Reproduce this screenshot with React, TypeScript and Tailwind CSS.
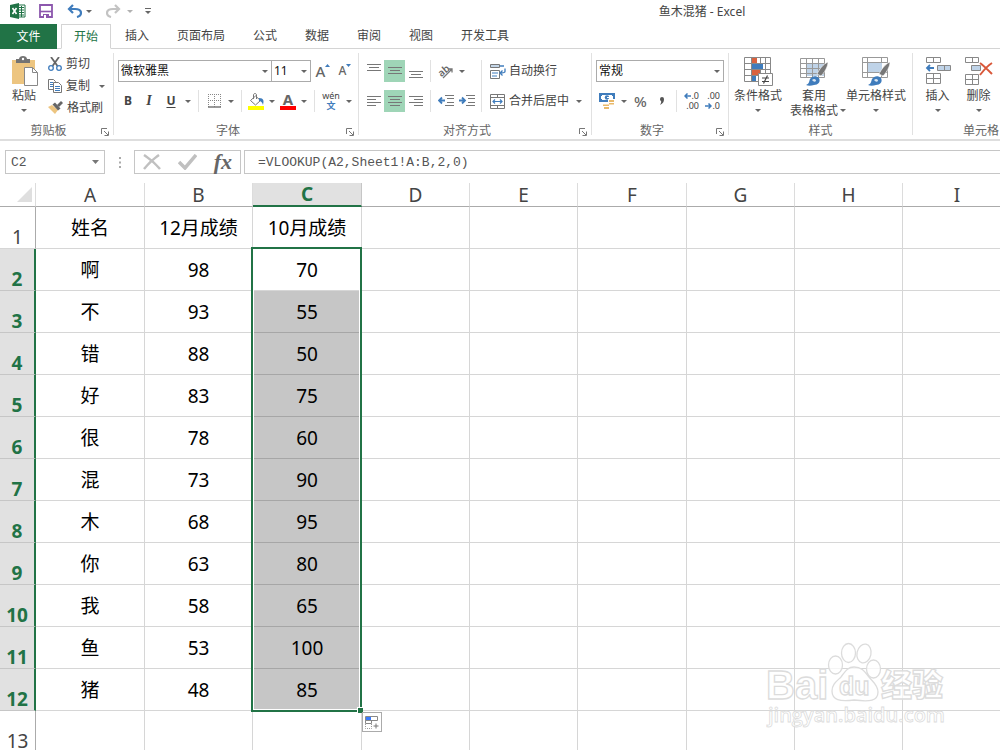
import type React from "react"
import { useState } from "react"

// 成绩表数据
const students = [
  { name: "啊", dec: 98, oct: 70 },
  { name: "不", dec: 93, oct: 55 },
  { name: "错", dec: 88, oct: 50 },
  { name: "好", dec: 83, oct: 75 },
  { name: "很", dec: 78, oct: 60 },
  { name: "混", dec: 73, oct: 90 },
  { name: "木", dec: 68, oct: 95 },
  { name: "你", dec: 63, oct: 80 },
  { name: "我", dec: 58, oct: 65 },
  { name: "鱼", dec: 53, oct: 100 },
  { name: "猪", dec: 48, oct: 85 },
]

const columns = ["A", "B", "C", "D", "E", "F", "G", "H", "I"]
const wideColumns = ["A", "C", "F", "I"]
const emptyColumns = ["D", "E", "F", "G", "H", "I"]
const tabs = ["开始", "插入", "页面布局", "公式", "数据", "审阅", "视图", "开发工具"]

interface IconProps {
  w: number
  h: number
  children: React.ReactNode
}

function Icon({ w, h, children }: IconProps) {
  return (
    <svg width={w} height={h} viewBox={`0 0 ${w} ${h}`} fill="none" className="shrink-0" aria-hidden="true">
      {children}
    </svg>
  )
}

// 下拉小三角
function Caret() {
  return (
    <Icon w={6} h={3}>
      <path d="M0 0h6L3 3z" fill="#666" />
    </Icon>
  )
}

function CaretButton({ label }: { label: string }) {
  return (
    <button type="button" aria-label={label} className="flex h-[22px] w-3 shrink-0 items-center justify-center">
      <Caret />
    </button>
  )
}

interface ToolProps {
  label: string
  className?: string
  active?: boolean
  children: React.ReactNode
}

function Tool({ label, className = "w-[21px]", active, children }: ToolProps) {
  return (
    <button
      type="button"
      aria-label={label}
      className={`flex h-[22px] shrink-0 items-center justify-center ${active ? "bg-[#9fd5b7]" : ""} ${className}`}
    >
      {children}
    </button>
  )
}

function Divider({ tall }: { tall?: boolean }) {
  return <div className={`mx-1 w-px shrink-0 bg-[#e1e1e1] ${tall ? "h-[52px]" : "h-[22px]"}`} />
}

// 功能区分组：上方按钮，下方组名
interface GroupProps {
  name: string
  className: string
  launcher?: boolean
  last?: boolean
  children: React.ReactNode
}

function Group({ name, className, launcher, last, children }: GroupProps) {
  return (
    <section aria-label={name} className={`relative flex shrink-0 flex-col ${className}`}>
      <div className="h-[74px]">{children}</div>
      <div className="text-center leading-4 text-[#666]">{name}</div>
      {launcher && (
        <button type="button" aria-label={`${name}设置`} className="absolute right-1 bottom-[3px]">
          <Icon w={8} h={8}>
            <path d="M.5 6V.5H6M3 3l4 4M7.5 3.5v4h-4" stroke="#777" />
          </Icon>
        </button>
      )}
      {!last && <div className="absolute top-1 -right-px bottom-1 w-px bg-[#e1e1e1]" />}
    </section>
  )
}

interface PickerProps {
  label: string
  value: string
  className: string
}

function Picker({ label, value, className }: PickerProps) {
  return (
    <div className={`relative h-[22px] shrink-0 ${className}`}>
      <select
        aria-label={label}
        defaultValue={value}
        className="h-full w-full appearance-none border border-[#ababab] bg-white pl-0.5 text-[#111] outline-none"
      >
        <option>{value}</option>
      </select>
      <div className="pointer-events-none absolute inset-y-0 right-1 flex items-center">
        <Caret />
      </div>
    </div>
  )
}

// 对齐图标，每条线 [起点, 终点]
function Lines({ rows, top = 2 }: { rows: number[][]; top?: number }) {
  return (
    <Icon w={14} h={14}>
      {rows.map(([from, to], i) => (
        <path key={i} d={`M${from} ${top + i * 3 + 0.5}H${to}`} stroke="#777" />
      ))}
    </Icon>
  )
}

interface BigToolProps {
  label: string[]
  className: string
  inlineCaret?: boolean
  children: React.ReactNode
}

function BigTool({ label, className, inlineCaret, children }: BigToolProps) {
  return (
    <button type="button" className={`flex shrink-0 flex-col items-center leading-[15px] ${className}`}>
      <span className="mb-[2px] flex h-[30px] items-center">{children}</span>
      {label.map((line, i) => (
        <span key={line} className="relative whitespace-nowrap">
          {line}
          {inlineCaret && i === 1 && (
            <span className="absolute inset-y-0 -right-2 flex items-center">
              <Caret />
            </span>
          )}
        </span>
      ))}
      {!inlineCaret && (
        <span className="flex h-[15px] items-center">
          <Caret />
        </span>
      )}
    </button>
  )
}

function Brush() {
  return (
    <>
      <path d="M29 6c-5 2-9 8-11 12l4 2c3-3 7-9 7-14z" fill="#777" stroke="#fff" strokeWidth=".6" />
      <path d="M7 29c3-1 3-3 4-6 2-3 6-4 9-1 2 4-1 7-5 7-3 1-6 1-8 0z" fill="#3f7cbc" />
      <path d="M13 24c2-2 4-1 4 1-1 1-2 1-3 0" fill="#dbe7f3" />
    </>
  )
}

function TitleBar() {
  return (
    <header className="flex h-6 items-start">
      <div className="flex h-[22px] w-40 shrink-0 items-center pl-[9px]">
        <Icon w={18} h={18}>
          <path d="M9 3h7v12H9z" fill="#fff" stroke="#217346" />
          <path d="M10 5.500h5M10 8h5M10 10.500h5M10 13h5M12.500 4v11" stroke="#217346" />
          <path d="M1 3l9-2v16l-9-2z" fill="#217346" />
          <path d="M3.500 6l4 6M7.500 6l-4 6" stroke="#fff" strokeWidth="1.600" />
        </Icon>
        <button type="button" aria-label="保存" className="ml-3">
          <Icon w={14} h={14}>
            <path d="M1 1h12v12H1z" stroke="#8c57ad" strokeWidth="1.800" />
            <path d="M1 7.500h12" stroke="#8c57ad" strokeWidth="1.600" />
            <path d="M4 10h6v4H4z" fill="#8c57ad" />
            <path d="M5 11h2v3H5z" fill="#fff" />
          </Icon>
        </button>
        <button type="button" aria-label="撤消" className="ml-[14px] flex items-center gap-1">
          <Icon w={15} h={14}>
            <path d="M6 1L2 5l4 4M2 5h6c4 0 6 1.500 6 4s-2 3.500-4 4" stroke="#3f7cbc" strokeWidth="2.200" />
          </Icon>
          <Caret />
        </button>
        <button type="button" aria-label="恢复" className="ml-3.5 flex items-center gap-1.5 opacity-50">
          <Icon w={15} h={14}>
            <path d="M9 1l4 4-4 4M13 5H7C3 5 1 6.500 1 9s2 3.500 4 4" stroke="#888" strokeWidth="2.200" />
          </Icon>
          <Caret />
        </button>
        <button type="button" aria-label="自定义快速访问工具栏" className="ml-3">
          <Icon w={6} h={6}>
            <path d="M0 .5h6" stroke="#666" />
            <path d="M0 3h6L3 6z" fill="#666" />
          </Icon>
        </button>
      </div>
      <h1 className="flex-1 pl-[244px] text-center leading-[23px] text-[#444]">鱼木混猪 - Excel</h1>
    </header>
  )
}

function TabBar() {
  const [current, setCurrent] = useState("开始")

  return (
    <nav className="flex h-[25px] border-b border-[#d4d4d4]">
      <button type="button" className="-mb-px mr-1 w-[57px] shrink-0 bg-[#217346] text-white">
        文件
      </button>
      {tabs.map((tab) => (
        <button
          key={tab}
          type="button"
          onClick={() => setCurrent(tab)}
          className={`shrink-0 ${
            tab === current ? "-mb-px border border-[#d4d4d4] border-b-white bg-white px-3 text-[#217346]" : "px-3.5 text-[#444]"
          }`}
        >
          {tab}
        </button>
      ))}
    </nav>
  )
}

function ClipboardGroup() {
  return (
    <Group name="剪贴板" className="w-[113px] pr-4" launcher>
      <div className="flex">
        <BigTool label={["粘贴"]} className="w-12 pt-[7px]">
          <Icon w={28} h={30}>
            <path d="M2 4h23v24H2z" fill="#edc580" />
            <path d="M6 3h3c0-4 8-4 8 0h3v4H6z" fill="#737373" />
            <circle cx="13" cy="3" r="1.200" fill="#fff" />
            <path d="M14.500 11.500h8l5 5v13h-13z" fill="#fff" stroke="#888" />
            <path d="M22.500 11.500v5h5" stroke="#888" />
          </Icon>
        </BigTool>
        <div className="flex flex-col whitespace-nowrap pt-1">
          <button type="button" className="flex h-[22px] items-center gap-1">
            <Icon w={14} h={14}>
              <path d="M3 0l6.500 9M11 0L4.500 9" stroke="#666" strokeWidth="1.800" />
              <circle cx="3" cy="11" r="2.300" stroke="#3f7cbc" strokeWidth="1.300" />
              <circle cx="11" cy="11" r="2.300" stroke="#3f7cbc" strokeWidth="1.300" />
            </Icon>
            剪切
          </button>
          <div className="flex h-[22px] items-center">
            <button type="button" className="flex items-center gap-1">
              <Icon w={14} h={14}>
                <path d="M.5.5h5l2 2v8h-7z" fill="#fff" stroke="#777" />
                <path d="M2 3.500h3M2 5.500h3M2 7.500h3" stroke="#3f7cbc" />
                <path d="M5.500 3.500h5l3 3v7h-8z" fill="#fff" stroke="#777" />
                <path d="M7 7.500h5M7 9.500h5M7 11.500h5" stroke="#3f7cbc" />
              </Icon>
              复制
            </button>
            <span className="ml-1.5">
              <CaretButton label="复制选项" />
            </span>
          </div>
          <button type="button" className="flex h-[22px] items-center gap-1">
            <Icon w={15} h={14}>
              <path d="M0 6l4-2 6 5-3 4z" fill="#edc580" />
              <path d="M4.500 3.500L7 1.500l5.500 6L10 9.500z" fill="#666" />
              <path d="M9 4l4-4 2 2-4 4z" fill="#666" />
            </Icon>
            格式刷
          </button>
        </div>
      </div>
    </Group>
  )
}

function FontGroup() {
  return (
    <Group name="字体" className="ml-px w-[244px] pl-1 pr-5" launcher>
      <div className="flex pt-[11px]">
        <Picker label="字体名称" value="微软雅黑" className="w-[154px]" />
        <Picker label="字号" value="11" className="-ml-px w-10" />
        <Tool label="增大字号" className="w-6">
          <span className="text-[15px] leading-5 font-medium text-[#666]">A</span>
          <span className="mb-3">
            <Icon w={5} h={3}>
              <path d="M0 3h5L2.500 0z" fill="#3f7cbc" />
            </Icon>
          </span>
        </Tool>
        <Tool label="减小字号" className="w-5">
          <span className="text-xs leading-5 font-medium text-[#666]">A</span>
          <span className="mb-3">
            <Icon w={5} h={3}>
              <path d="M0 0h5L2.500 3z" fill="#3f7cbc" />
            </Icon>
          </span>
        </Tool>
      </div>
      <div className="flex pt-2">
        <Tool label="加粗" className="w-5">
          <span className="font-bold">B</span>
        </Tool>
        <Tool label="倾斜" className="w-[22px]">
          <span className="font-['Liberation_Serif',serif] text-sm font-bold italic">I</span>
        </Tool>
        <Tool label="下划线" className="w-[22px]">
          <span className="font-bold underline underline-offset-2">U</span>
        </Tool>
        <CaretButton label="下划线选项" />
        <Divider />
        <Tool label="边框" className="w-[22px]">
          <Icon w={13} h={14}>
            <path d="M.5 0v13M6.500 0v13M12.500 0v13M0 .5h13M0 6.500h13" stroke="#888" strokeDasharray="1 1" />
            <path d="M0 13h13" stroke="#777" strokeWidth="1.500" />
          </Icon>
        </Tool>
        <CaretButton label="边框选项" />
        <Divider />
        <Tool label="填充颜色" className="w-5">
          <Icon w={16} h={17}>
            <path d="M7.500 3l5 4.500-5 4.500-5-4.500z" fill="#fff" stroke="#777" />
            <path d="M5.500 6V2c0-2 3-2 3 0v4" stroke="#777" />
            <path d="M11 5c5 0 5 3 4 7-1-3-2-4-4-4z" fill="#3f7cbc" />
            <path d="M0 13h16v4H0z" fill="#ff0" />
          </Icon>
        </Tool>
        <CaretButton label="填充颜色选项" />
        <Tool label="字体颜色" className="w-5">
          <span className="w-4 border-b-4 border-[#f00] text-[15px] leading-[13px] font-bold text-[#666]">A</span>
        </Tool>
        <CaretButton label="字体颜色选项" />
        <Divider />
        <Tool label="拼音" className="w-6 flex-col">
          <span className="text-[9px] leading-[10px]">wén</span>
          <span className="text-[9px] leading-[10px] font-bold text-[#3f7cbc]">文</span>
        </Tool>
        <CaretButton label="拼音选项" />
      </div>
    </Group>
  )
}

function AlignGroup() {
  return (
    <Group name="对齐方式" className="ml-px w-[232px] pl-1 pr-5" launcher>
      <div className="flex pt-[11px]">
        <div>
          <div className="flex">
            <Tool label="顶端对齐">
              <Lines rows={[[0, 14], [2, 12], [0, 14]]} top={0} />
            </Tool>
            <Tool label="垂直居中" active>
              <Lines rows={[[0, 14], [2, 12], [0, 14]]} top={3} />
            </Tool>
            <Tool label="底端对齐">
              <Lines rows={[[0, 14], [2, 12], [0, 14]]} top={7} />
            </Tool>
            <Divider />
            <Tool label="方向">
              <Icon w={18} h={18}>
                <text x="1" y="12" fontSize="10" fontWeight="600" fill="#666" transform="rotate(-40 7 9)">
                  ab
                </text>
                <path d="M6 16l9-9M11.500 7H15v3.500" stroke="#777" strokeWidth="1.300" />
              </Icon>
            </Tool>
            <CaretButton label="方向选项" />
          </div>
          <div className="flex pt-2">
            <Tool label="左对齐">
              <Lines rows={[[0, 14], [0, 9], [0, 14], [0, 9]]} />
            </Tool>
            <Tool label="居中" active>
              <Lines rows={[[0, 14], [2, 12], [0, 14], [2, 12]]} />
            </Tool>
            <Tool label="右对齐">
              <Lines rows={[[0, 14], [5, 14], [0, 14], [5, 14]]} />
            </Tool>
            <Divider />
            <Tool label="减少缩进量">
              <Icon w={16} h={12}>
                <path d="M7 .5h9M9 3.500h7M9 7.500h7M7 10.500h9" stroke="#777" />
                <path d="M1 5.500h6M4 2.500l-3 3 3 3" stroke="#3f7cbc" strokeWidth="1.800" />
              </Icon>
            </Tool>
            <Tool label="增加缩进量">
              <Icon w={16} h={12}>
                <path d="M7 .5h9M9 3.500h7M9 7.500h7M7 10.500h9" stroke="#777" />
                <path d="M0 5.500h6M3 2.500l3 3-3 3" stroke="#3f7cbc" strokeWidth="1.800" />
              </Icon>
            </Tool>
          </div>
        </div>
        <Divider tall />
        <div className="pl-1">
          <button type="button" className="flex h-[22px] items-center gap-[3px] whitespace-nowrap">
            <Icon w={16} h={15}>
              <path d="M.5.5h9v3h-9z" fill="#c4d6e8" stroke="#777" />
              <path d="M10 2h4" stroke="#3f7cbc" strokeWidth="1.500" />
              <path d="M.5 6.500h9v8h-9z" stroke="#777" />
              <path d="M2 9h6M2 12h5" stroke="#3f7cbc" />
              <path d="M15 4.500v3c0 1-1 1.500-5 1.500M12.500 6.500L10 9l2.500 2.500" stroke="#3f7cbc" strokeWidth="1.300" />
            </Icon>
            自动换行
          </button>
          <div className="flex pt-2">
            <button type="button" className="flex h-[22px] items-center gap-[3px] whitespace-nowrap">
              <Icon w={16} h={15}>
                <path d="M.5.5h14v14H.5zM0 3.500h15M0 11.500h15M7.500 0v3.500M7.500 11.500V15" stroke="#777" />
                <path d="M3 7.500h9M5 5.500l-2 2 2 2M10 5.500l2 2-2 2" stroke="#3f7cbc" strokeWidth="1.200" />
              </Icon>
              合并后居中
            </button>
            <span className="ml-1">
              <CaretButton label="合并选项" />
            </span>
          </div>
        </div>
      </div>
    </Group>
  )
}

function NumberGroup() {
  return (
    <Group name="数字" className="ml-px w-[136px] pl-1 pr-5" launcher>
      <div className="flex pt-[11px]">
        <Picker label="数字格式" value="常规" className="w-32" />
      </div>
      <div className="flex pt-2">
        <Tool label="会计数字格式" className="w-[22px]">
          <Icon w={16} h={16}>
            <path d="M0 0h16v9H0z" fill="#3f7cbc" />
            <path d="M2 3h1V2h10v1h1v3h-1v1H3V6H2z" fill="#fff" />
            <circle cx="8" cy="4.500" r="2.200" fill="#3f7cbc" />
            <path d="M8 4.500h3" stroke="#fff" />
            <path d="M9 6h7v6h-5v4H3v-5h6z" fill="#fff" />
            <path d="M10 7h5v2h-5zM10 10h5v1.500h-5zM4 11.500h6v1.500H4zM5 14h5v2H5z" fill="#e9b96a" />
          </Icon>
        </Tool>
        <CaretButton label="会计数字格式选项" />
        <Tool label="百分比样式">
          <span className="text-[15px] leading-5 font-medium text-[#666]">%</span>
        </Tool>
        <Tool label="千位分隔样式">
          <Icon w={6} h={8}>
            <path d="M1 2a2 2 0 0 1 4 0c0 3-1 4-4 6 1-2 1.500-3 1-4A2 2 0 0 1 1 2z" fill="#555" />
          </Icon>
        </Tool>
        <Divider />
        <Tool label="增加小数位数" className="w-[21px] flex-col items-end pr-[3px]">
          <span className="flex items-center text-[9px] leading-[10px]">
            <Icon w={7} h={6}>
              <path d="M1 3h6M3.500.5L1 3l2.500 2.500" stroke="#3f7cbc" strokeWidth="1.500" />
            </Icon>
            .0
          </span>
          <span className="text-[9px] leading-[10px]">.00</span>
        </Tool>
        <Tool label="减少小数位数" className="w-[21px] flex-col items-end pr-[3px]">
          <span className="text-[9px] leading-[10px]">.00</span>
          <span className="flex items-center text-[9px] leading-[10px]">
            <Icon w={7} h={6}>
              <path d="M0 3h6M3.500.5L6 3 3.500 5.500" stroke="#3f7cbc" strokeWidth="1.500" />
            </Icon>
            .0
          </span>
        </Tool>
      </div>
    </Group>
  )
}

function StyleGroup() {
  return (
    <Group name="样式" className="ml-px w-[183px]">
      <div className="flex pt-[7px]">
        <BigTool label={["条件格式"]} className="w-[58px]">
          <Icon w={30} h={30}>
            <path d="M1.500 1.500h26v24h-26zM8.500 1v24M17.500 1v24M22.500 1v24M1 7.500h27M1 13.500h27M1 19.500h27" stroke="#888" />
            <path d="M9 2h5v5H9zM9 14h8v5H9z" fill="#d9623f" />
            <path d="M9 8h11v5H9zM9 20h4v5H9z" fill="#3f7cbc" />
            <path d="M15.500 17.500h14v12h-14z" fill="#fff" stroke="#888" />
            <path d="M19 22h7M19 25.500h7M24.500 19.500l-4 8" stroke="#444" strokeWidth="1.200" />
          </Icon>
        </BigTool>
        <BigTool label={["套用", "表格格式"]} className="w-[54px]" inlineCaret>
          <Icon w={30} h={30}>
            <path d="M8 8h18v12H8z" fill="#bfd3e8" />
            <path d="M1.500 2.500h24v19h-24zM7.500 2v20M13.500 2v20M19.500 2v20M1 7.500h24M1 12.500h24M1 17.500h24" stroke="#999" />
            <Brush />
          </Icon>
        </BigTool>
        <BigTool label={["单元格样式"]} className="w-[70px]">
          <Icon w={30} h={30}>
            <path d="M1.500 1.500h25v20h-25zM6.500 1v21M20.500 1v5M20.500 17v5M1 6.500h26M1 16.500h26" stroke="#999" />
            <path d="M7 7h14v9H7z" fill="#bfd3e8" />
            <Brush />
          </Icon>
        </BigTool>
      </div>
    </Group>
  )
}

function CellGroup() {
  return (
    <Group name="单元格" className="ml-px w-[132px] pl-1" last>
      <div className="flex pt-[7px]">
        <BigTool label={["插入"]} className="w-[41px]">
          <Icon w={28} h={30}>
            <path d="M2.500 1.500h14v5h-14zM9.500 1v6M2.500 17.500h14v10h-14zM9.500 17v11M2 22.500h15" stroke="#888" />
            <path d="M13.500 9.500h13v5h-13z" fill="#bfd3e8" stroke="#888" />
            <path d="M20.500 9v6" stroke="#888" />
            <path d="M3 12h7M6 9l-3 3 3 3" stroke="#3f7cbc" strokeWidth="1.800" />
          </Icon>
        </BigTool>
        <BigTool label={["删除"]} className="w-[41px]">
          <Icon w={28} h={30}>
            <path d="M.5 1.500h13v5H.5zM7.500 1v6M.5 18.500h13v10H.5zM7.500 18v11M0 23.500h14" stroke="#888" />
            <path d="M6.500 9.500h9v5h-9z" fill="#bfd3e8" stroke="#888" />
            <path d="M15 7c4 3 8 7 12 11M27 7c-5 3-8 7-12 12" stroke="#d9583a" strokeWidth="2" />
          </Icon>
        </BigTool>
      </div>
    </Group>
  )
}

function FormulaBar() {
  return (
    <div className="flex h-[42px] items-start pt-[9px]">
      <div className="relative ml-[5px] h-6 w-[100px] shrink-0">
        <input
          aria-label="名称框"
          defaultValue="C2"
          className="h-full w-full border border-[#c6c6c6] pl-[5px] font-['Liberation_Mono',monospace] text-[13px] text-[#555] outline-none"
        />
        <div className="pointer-events-none absolute inset-y-0 right-1.5 flex items-center">
          <Icon w={7} h={4}>
            <path d="M0 0h7L3.500 4z" fill="#777" />
          </Icon>
        </div>
      </div>
      <div className="flex h-6 w-[29px] shrink-0 items-center justify-center">
        <Icon w={2} h={11}>
          <path d="M1 0v11" stroke="#aaa" strokeWidth="2" strokeDasharray="2 2.500" />
        </Icon>
      </div>
      <div className="flex h-6 w-[107px] shrink-0 items-center justify-between border border-[#c6c6c6] px-2">
        <button type="button" aria-label="取消">
          <Icon w={18} h={16}>
            <path d="M1 1c6 4 11 8 16 14M16 1C10 5 6 9 1 15" stroke="#c0c0c0" strokeWidth="2.500" />
          </Icon>
        </button>
        <button type="button" aria-label="输入">
          <Icon w={19} h={16}>
            <path d="M1 8l6 6L18 1" stroke="#c0c0c0" strokeWidth="3.500" />
          </Icon>
        </button>
        <button
          type="button"
          aria-label="插入函数"
          className="font-['Liberation_Serif',serif] text-[22px] leading-5 font-bold text-[#666] italic"
        >
          fx
        </button>
      </div>
      <input
        aria-label="编辑栏"
        defaultValue="=VLOOKUP(A2,Sheet1!A:B,2,0)"
        className="ml-[3px] h-6 min-w-0 flex-1 border border-r-0 border-[#c6c6c6] pl-[13px] font-['Liberation_Mono',monospace] text-[13px] text-[#555] outline-none"
      />
    </div>
  )
}

// C2:C12 选区边框、填充柄和自动填充选项
function Selection() {
  return (
    <div className="pointer-events-none absolute -top-0.5 -right-px -left-0.5 h-[465px] border-2 border-[#217346] shadow-[inset_0_0_0_1px_#fff]">
      <span className="absolute -right-[3px] -bottom-[3px] h-1.5 w-1.5 border-t border-l border-white bg-[#217346]" />
      <button
        type="button"
        aria-label="自动填充选项"
        className="pointer-events-auto absolute top-[463px] left-[109px] flex h-5 w-5 items-center justify-center border border-[#ababab] bg-white"
      >
        <Icon w={14} h={14}>
          <path d="M.5 1.500h12v4H.5zM.5 5.500h6v3h-6z" fill="#fff" stroke="#888" />
          <path d="M1 2h5v3H1z" fill="#3a7bfd" />
          <path d="M.5 9v4.500h6V9" stroke="#999" strokeDasharray="1 1" />
          <path d="M11 8.500v5M8.500 11h5" stroke="#777" />
        </Icon>
      </button>
    </div>
  )
}

const cell = "border-r border-b border-[#d6d6d6] p-0 text-center align-middle"

function RowHead({ row, selected }: { row: number; selected?: boolean }) {
  return (
    <th
      scope="row"
      className={`border-b p-0 pb-0.5 text-center align-bottom leading-[18px] ${
        selected
          ? "border-r-2 border-b-[#c6c6c6] border-r-[#217346] bg-[#e1e1e1] font-bold text-[#217346]"
          : "border-r border-b-[#d6d6d6] border-r-[#ababab] font-normal text-[#444]"
      }`}
    >
      {row}
    </th>
  )
}

function EmptyCells() {
  return (
    <>
      {emptyColumns.map((c) => (
        <td key={c} className={cell} />
      ))}
    </>
  )
}

function Sheet() {
  return (
    <table className="w-0 min-w-full table-fixed border-separate border-spacing-0 text-[19px] leading-6 text-black">
      <colgroup>
        <col className="w-9" />
        {columns.map((c) => (
          <col key={c} className={wideColumns.includes(c) ? "w-[109px]" : "w-[108px]"} />
        ))}
      </colgroup>
      <thead>
        <tr className="h-6">
          <td className="border-r border-b border-r-[#dcdcdc] border-b-[#ababab] p-0">
            <span className="flex justify-end pr-[3px]">
              <Icon w={15} h={15}>
                <path d="M15 0v15H0z" fill="#dfdfdf" />
              </Icon>
            </span>
          </td>
          {columns.map((c) => (
            <th
              key={c}
              scope="col"
              className={`p-0 text-center leading-[22px] ${
                c === "C"
                  ? "border-r border-b-2 border-r-[#c6c6c6] border-b-[#217346] bg-[#e1e1e1] align-top font-bold text-[#217346]"
                  : "border-r border-b border-r-[#dcdcdc] border-b-[#ababab] align-bottom font-normal text-[#444]"
              }`}
            >
              {c}
            </th>
          ))}
        </tr>
      </thead>
      <tbody>
        <tr className="h-[42px]">
          <RowHead row={1} />
          <td className={cell}>姓名</td>
          <td className={cell}>12月成绩</td>
          <td className={cell}>10月成绩</td>
          <EmptyCells />
        </tr>
        {students.map((s, i) => (
          <tr key={s.name} className="h-[42px]">
            <RowHead row={i + 2} selected />
            <td className={cell}>{s.name}</td>
            <td className={cell}>{s.dec}</td>
            {i === 0 ? (
              <td className={`relative z-10 ${cell}`}>
                {s.oct}
                <Selection />
              </td>
            ) : (
              <td className="border-r border-b border-r-[#d6d6d6] border-b-[#a6a6a6] bg-[#c6c6c6] p-0 text-center align-middle">
                {s.oct}
              </td>
            )}
            <EmptyCells />
          </tr>
        ))}
        <tr className="h-[42px]">
          <RowHead row={13} />
          <td className={cell} />
          <td className={cell} />
          <td className={cell} />
          <EmptyCells />
        </tr>
      </tbody>
    </table>
  )
}

// 右下角水印
function Watermark() {
  return (
    <svg
      width="190"
      height="92"
      viewBox="0 0 190 92"
      className="pointer-events-none absolute right-11 bottom-4 z-20"
      fill="#fff"
      fillOpacity=".75"
      stroke="#dcdcdc"
      strokeWidth="1.300"
      aria-label="百度经验"
    >
      <text x="0" y="57" fontSize="40" fontWeight="700" fontFamily="Liberation Sans, sans-serif">
        Bai
      </text>
      <ellipse cx="69.500" cy="23" rx="7" ry="9" />
      <ellipse cx="82.500" cy="11" rx="7" ry="9.500" />
      <ellipse cx="98" cy="11.500" rx="7" ry="9.500" transform="rotate(12 98 11.500)" />
      <ellipse cx="107.500" cy="27" rx="7" ry="9" />
      <path d="M88 25c8 0 11 5 15 10s9 8 9 15c0 9-8 10-24 8-14 2-22 0-22-9 0-7 5-10 9-14 4-5 6-10 13-10z" />
      <text x="73" y="53" fontSize="25" fontWeight="700" fontFamily="Liberation Sans, sans-serif">
        du
      </text>
      <text x="115" y="54" fontSize="31" fontWeight="900" fontFamily="Noto Sans CJK SC, sans-serif">
        经验
      </text>
      <text x="2" y="80" fontSize="20" fontWeight="600" fontFamily="Open Sans, sans-serif" strokeWidth=".8">
        jingyan.baidu.com
      </text>
    </svg>
  )
}

export default function App() {
  return (
    <div className="relative flex h-screen flex-col overflow-hidden bg-white font-['Noto_Sans','Noto_Sans_CJK_SC',sans-serif] text-xs text-[#444]">
      <TitleBar />
      <TabBar />
      <div className="flex h-[92px] shrink-0 overflow-hidden border-b-2 border-[#dedede]">
        <ClipboardGroup />
        <FontGroup />
        <AlignGroup />
        <NumberGroup />
        <StyleGroup />
        <CellGroup />
      </div>
      <FormulaBar />
      <main className="min-h-0 flex-1 overflow-hidden">
        <Sheet />
      </main>
      <Watermark />
    </div>
  )
}
